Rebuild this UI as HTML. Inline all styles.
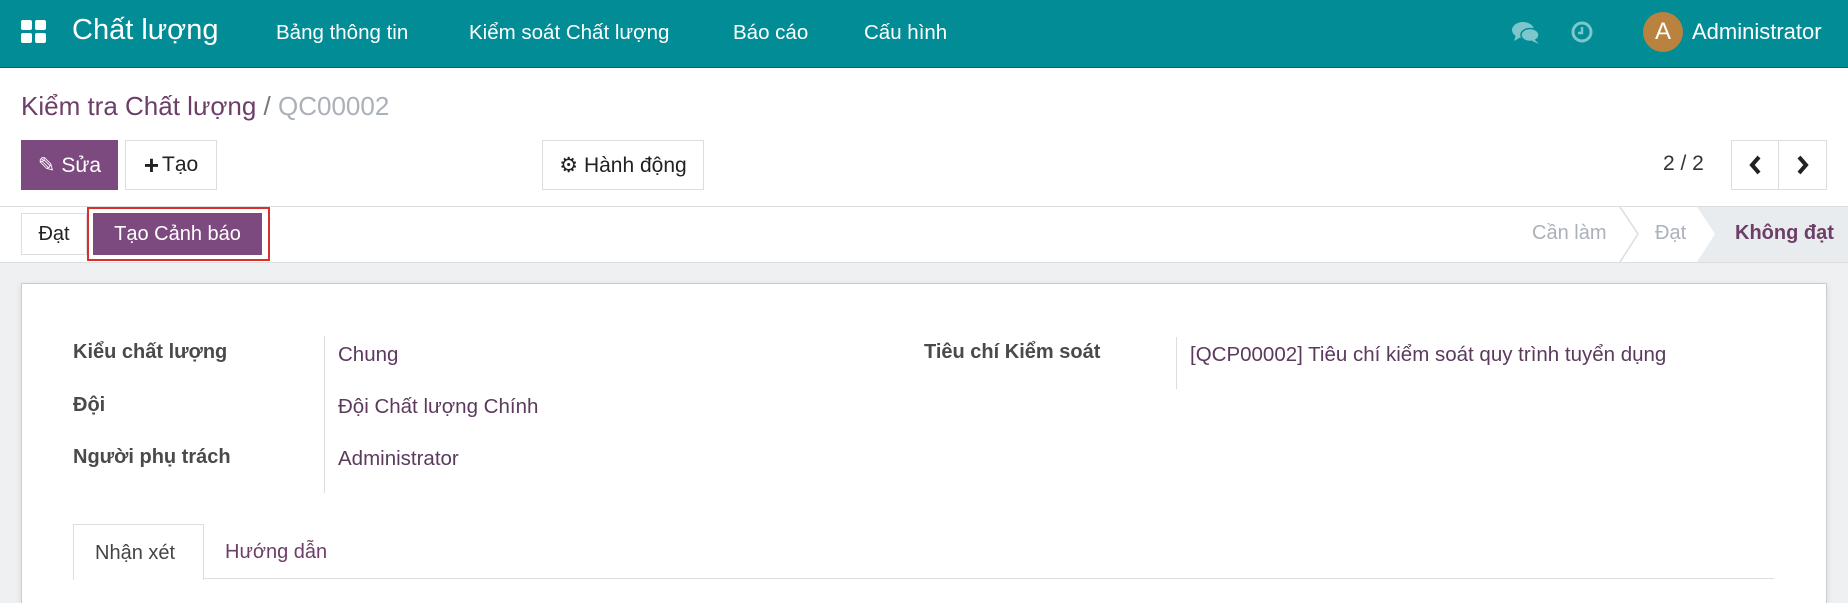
<!DOCTYPE html>
<html style="width:1848px;height:603px;overflow:hidden"><head><meta charset="utf-8"><style>
*{margin:0;padding:0;box-sizing:border-box}
body{width:1848px;height:603px;overflow:hidden;background:#fff;font-family:"Liberation Sans","DejaVu Sans",sans-serif;position:relative;color:#333}
.a{position:absolute;white-space:nowrap}
.nav{left:0;top:0;width:1848px;height:68px;background:#028c96;border-bottom:1px solid #04646b}
.nav .a{color:#fff}
.m{font-size:20.5px;top:21px}
.btn{border:1px solid #ddd;background:#fff;font-size:21px;color:#222;display:flex;align-items:center;justify-content:center}
.lbl{font-size:20px;font-weight:bold;color:#4a4a4a;left:73px}
.val{font-size:20.5px;color:#5b3a5c}
</style></head><body>
<div class="a nav">
  <svg class="a" style="left:21px;top:20px" width="25" height="23" viewBox="0 0 25 23"><rect x="0" y="0" width="11" height="10" rx="2" fill="#fff"/><rect x="14" y="0" width="11" height="10" rx="2" fill="#fff"/><rect x="0" y="13" width="11" height="10" rx="2" fill="#fff"/><rect x="14" y="13" width="11" height="10" rx="2" fill="#fff"/></svg>
  <div class="a" style="left:72px;top:14px;font-size:29px">Chất lượng</div>
  <div class="a m" style="left:276px">Bảng thông tin</div>
  <div class="a m" style="left:469px">Kiểm soát Chất lượng</div>
  <div class="a m" style="left:733px">Báo cáo</div>
  <div class="a m" style="left:864px">Cấu hình</div>
  <svg class="a" style="left:1512px;top:21px" width="28" height="24" viewBox="0 0 28 24"><ellipse cx="11" cy="9" rx="11" ry="8" fill="#7cc6cc"/><path d="M4 14 L2 20 L9 16Z" fill="#7cc6cc"/><ellipse cx="18" cy="14" rx="9" ry="6.5" fill="#7cc6cc" stroke="#028c96" stroke-width="1.5"/><path d="M22 18 L27 23 L20 20Z" fill="#7cc6cc"/></svg>
  <svg class="a" style="left:1571px;top:21px" width="22" height="22" viewBox="0 0 22 22"><circle cx="11" cy="11" r="9" fill="none" stroke="#7cc6cc" stroke-width="3"/><path d="M11 6 V12 H7" fill="none" stroke="#7cc6cc" stroke-width="2.5"/></svg>
  <div class="a" style="left:1643px;top:12px;width:40px;height:40px;border-radius:50%;background:#b9833f;color:#fff;font-size:24px;text-align:center;line-height:40px">A</div>
  <div class="a" style="left:1692px;top:19px;font-size:22px">Administrator</div>
</div>
<div class="a" style="left:21px;top:91px;font-size:26px;color:#6c3e68">Kiểm tra Chất lượng <span style="color:#777">/</span> <span style="color:#aab1b8">QC00002</span></div>
<div class="a btn" style="left:21px;top:140px;width:97px;height:50px;background:#7c4a7f;border-color:#7c4a7f;color:#fff">✎ Sửa</div>
<div class="a btn" style="left:125px;top:140px;width:92px;height:50px"><b style="font-size:26px;margin-right:3px">+</b>Tạo</div>
<div class="a btn" style="left:542px;top:140px;width:162px;height:50px">⚙ Hành động</div>
<div class="a" style="left:1663px;top:152px;font-size:21px;color:#333">2 / 2</div>
<div class="a btn" style="left:1731px;top:140px;width:48px;height:50px"><svg width="14" height="20" viewBox="0 0 14 20"><path d="M11 2 L4 10 L11 18" fill="none" stroke="#222" stroke-width="4"/></svg></div>
<div class="a btn" style="left:1778px;top:140px;width:49px;height:50px"><svg width="14" height="20" viewBox="0 0 14 20"><path d="M3 2 L10 10 L3 18" fill="none" stroke="#222" stroke-width="4"/></svg></div>
<div class="a" style="left:0;top:206px;width:1848px;height:1px;background:#ddd"></div>
<div class="a btn" style="left:21px;top:213px;width:66px;height:42px;font-size:20px">Đạt</div>
<div class="a" style="left:87px;top:207px;width:183px;height:54px;border:2px solid #d9302c"></div>
<div class="a btn" style="left:93px;top:213px;width:169px;height:42px;background:#7c4a7f;border-color:#7c4a7f;color:#fff;font-size:20px">Tạo Cảnh báo</div>
<div class="a" style="left:1532px;top:222px;font-size:20px;color:#aab1b8">Cần làm</div>
<svg class="a" style="left:1618px;top:207px" width="22" height="55"><path d="M2 0 L20 27 L2 55" fill="none" stroke="#ddd" stroke-width="1.5"/></svg>
<div class="a" style="left:1655px;top:222px;font-size:20px;color:#aab1b8">Đạt</div>
<svg class="a" style="left:1697px;top:207px" width="151" height="55"><path d="M0 0 H151 V55 H0 L18 27Z" fill="#e9ecef"/></svg>
<div class="a" style="left:1735px;top:222px;font-size:20px;color:#6c3e68;font-weight:bold">Không đạt</div>
<div class="a" style="left:0;top:262px;width:1848px;height:341px;background:#eef0f2;border-top:1px solid #ddd"></div>
<div class="a" style="left:21px;top:283px;width:1806px;height:320px;background:#fff;border:1px solid #ccc;border-bottom:none;box-shadow:0 2px 6px rgba(0,0,0,.1)"></div>
<div class="a lbl" style="top:341px">Kiểu chất lượng</div>
<div class="a lbl" style="top:394px">Đội</div>
<div class="a lbl" style="top:446px">Người phụ trách</div>
<div class="a" style="left:324px;top:336px;width:1px;height:157px;background:#ddd"></div>
<div class="a val" style="left:338px;top:343px">Chung</div>
<div class="a val" style="left:338px;top:395px">Đội Chất lượng Chính</div>
<div class="a val" style="left:338px;top:447px">Administrator</div>
<div class="a lbl" style="left:924px;top:341px">Tiêu chí Kiểm soát</div>
<div class="a" style="left:1176px;top:337px;width:1px;height:52px;background:#ddd"></div>
<div class="a val" style="left:1190px;top:343px">[QCP00002] Tiêu chí kiểm soát quy trình tuyển dụng</div>
<div class="a" style="left:73px;top:578px;width:1701px;height:1px;background:#ddd"></div>
<div class="a" style="left:73px;top:524px;width:131px;height:56px;background:#fff;border:1px solid #ddd;border-bottom:none;font-size:20px;color:#444;padding:17px 0 0 21px">Nhận xét</div>
<div class="a" style="left:225px;top:541px;font-size:20px;color:#6c3e68">Hướng dẫn</div>
</body></html>
